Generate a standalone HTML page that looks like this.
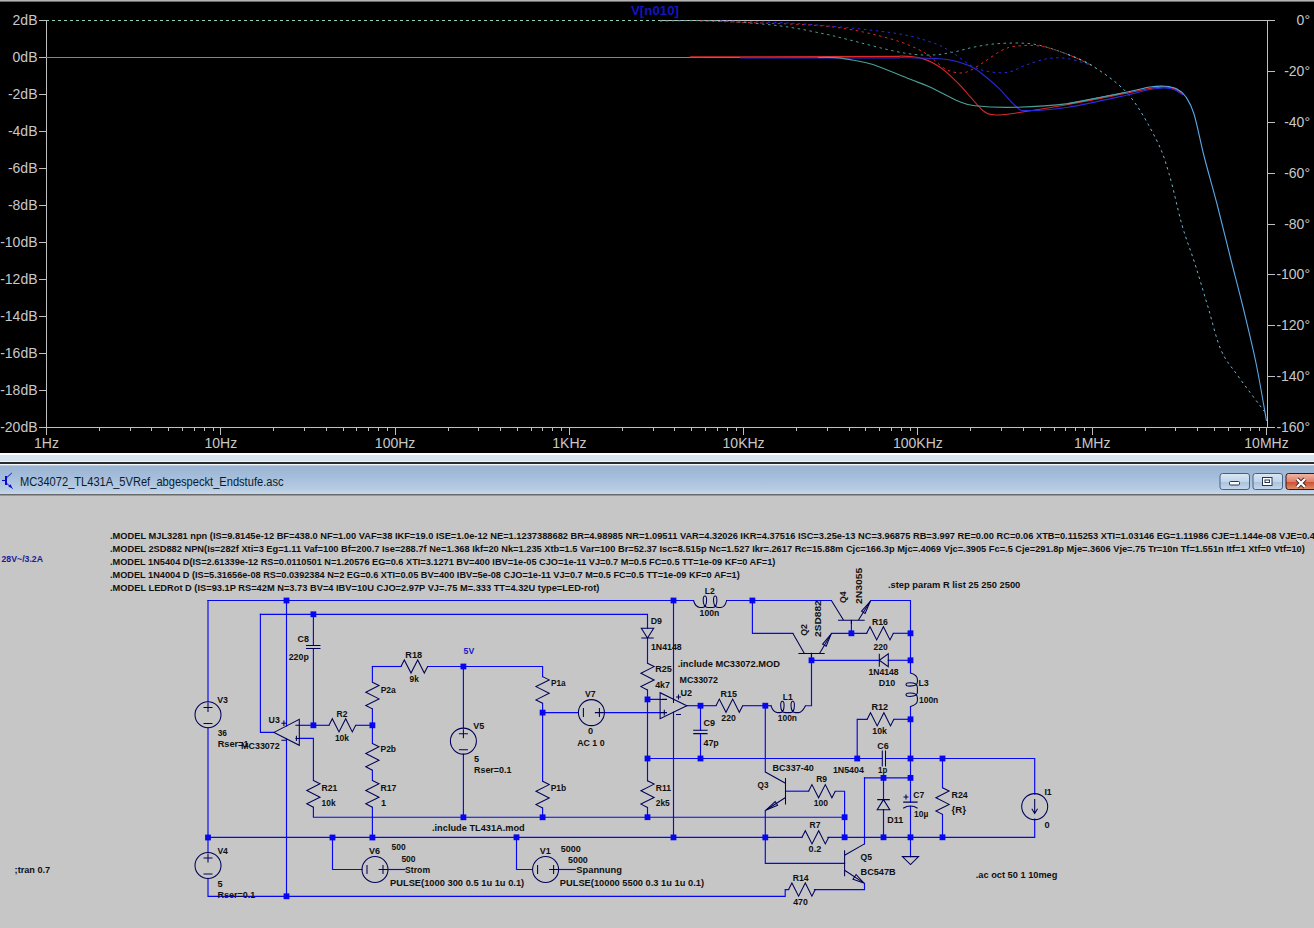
<!DOCTYPE html><html><head><meta charset="utf-8"><style>html,body{margin:0;padding:0;width:1314px;height:928px;overflow:hidden;background:#c6c6c6}svg{display:block}</style></head><body>
<svg width="1314" height="928" viewBox="0 0 1314 928">
<defs><linearGradient id="tb" x1="0" y1="0" x2="0" y2="1"><stop offset="0" stop-color="#9bb4d2"/><stop offset="0.35" stop-color="#a2bcda"/><stop offset="0.8" stop-color="#b6cbe2"/><stop offset="1" stop-color="#c6d8ea"/></linearGradient><linearGradient id="bmin" x1="0" y1="0" x2="0" y2="1"><stop offset="0" stop-color="#dbe7f4"/><stop offset="0.5" stop-color="#c2d5ea"/><stop offset="0.51" stop-color="#a9c1dd"/><stop offset="1" stop-color="#c5d7ec"/></linearGradient><linearGradient id="bcls" x1="0" y1="0" x2="0" y2="1"><stop offset="0" stop-color="#f0b8a8"/><stop offset="0.5" stop-color="#e0806a"/><stop offset="0.51" stop-color="#cc4a2c"/><stop offset="1" stop-color="#e0906e"/></linearGradient></defs>
<rect x="0" y="0" width="1314" height="453" fill="#000"/>
<rect x="0" y="0" width="1314" height="1" fill="#b4b4b4"/><rect x="0" y="1" width="1314" height="1" fill="#6a6a6a"/>
<g stroke="#c0c0c0" stroke-width="1" fill="none" shape-rendering="crispEdges">
<path d="M46.5 20.5V427.5H1267.5V20.5"/>
<path d="M660 20.5H1267.5"/>
<path d="M39 20.5H46.5"/>
<path d="M39 57.5H46.5"/>
<path d="M39 94.5H46.5"/>
<path d="M39 131.5H46.5"/>
<path d="M39 168.5H46.5"/>
<path d="M39 205.5H46.5"/>
<path d="M39 242.5H46.5"/>
<path d="M39 279.5H46.5"/>
<path d="M39 316.5H46.5"/>
<path d="M39 353.5H46.5"/>
<path d="M39 390.5H46.5"/>
<path d="M39 427.5H46.5"/>
<path d="M1267.5 20.5H1275"/>
<path d="M1267.5 71.4H1275"/>
<path d="M1267.5 122.2H1275"/>
<path d="M1267.5 173.1H1275"/>
<path d="M1267.5 224.0H1275"/>
<path d="M1267.5 274.9H1275"/>
<path d="M1267.5 325.8H1275"/>
<path d="M1267.5 376.6H1275"/>
<path d="M1267.5 427.5H1275"/>
<path d="M46.5 427.5V434.5"/>
<path d="M99.5 427.5V430.5"/>
<path d="M130.5 427.5V430.5"/>
<path d="M151.5 427.5V430.5"/>
<path d="M168.5 427.5V430.5"/>
<path d="M182.5 427.5V430.5"/>
<path d="M194.5 427.5V430.5"/>
<path d="M204.5 427.5V430.5"/>
<path d="M213.5 427.5V430.5"/>
<path d="M220.8 427.5V434.5"/>
<path d="M273.5 427.5V430.5"/>
<path d="M304.5 427.5V430.5"/>
<path d="M326.5 427.5V430.5"/>
<path d="M343.5 427.5V430.5"/>
<path d="M356.5 427.5V430.5"/>
<path d="M368.5 427.5V430.5"/>
<path d="M378.5 427.5V430.5"/>
<path d="M387.5 427.5V430.5"/>
<path d="M395.1 427.5V434.5"/>
<path d="M448.5 427.5V430.5"/>
<path d="M478.5 427.5V430.5"/>
<path d="M500.5 427.5V430.5"/>
<path d="M517.5 427.5V430.5"/>
<path d="M531.5 427.5V430.5"/>
<path d="M542.5 427.5V430.5"/>
<path d="M552.5 427.5V430.5"/>
<path d="M561.5 427.5V430.5"/>
<path d="M569.4 427.5V434.5"/>
<path d="M622.5 427.5V430.5"/>
<path d="M653.5 427.5V430.5"/>
<path d="M674.5 427.5V430.5"/>
<path d="M691.5 427.5V430.5"/>
<path d="M705.5 427.5V430.5"/>
<path d="M717.5 427.5V430.5"/>
<path d="M727.5 427.5V430.5"/>
<path d="M736.5 427.5V430.5"/>
<path d="M743.6 427.5V434.5"/>
<path d="M796.5 427.5V430.5"/>
<path d="M827.5 427.5V430.5"/>
<path d="M849.5 427.5V430.5"/>
<path d="M865.5 427.5V430.5"/>
<path d="M879.5 427.5V430.5"/>
<path d="M891.5 427.5V430.5"/>
<path d="M901.5 427.5V430.5"/>
<path d="M910.5 427.5V430.5"/>
<path d="M917.9 427.5V434.5"/>
<path d="M970.5 427.5V430.5"/>
<path d="M1001.5 427.5V430.5"/>
<path d="M1023.5 427.5V430.5"/>
<path d="M1040.5 427.5V430.5"/>
<path d="M1054.5 427.5V430.5"/>
<path d="M1065.5 427.5V430.5"/>
<path d="M1075.5 427.5V430.5"/>
<path d="M1084.5 427.5V430.5"/>
<path d="M1092.2 427.5V434.5"/>
<path d="M1145.5 427.5V430.5"/>
<path d="M1175.5 427.5V430.5"/>
<path d="M1197.5 427.5V430.5"/>
<path d="M1214.5 427.5V430.5"/>
<path d="M1228.5 427.5V430.5"/>
<path d="M1240.5 427.5V430.5"/>
<path d="M1250.5 427.5V430.5"/>
<path d="M1259.5 427.5V430.5"/>
<path d="M1266.5 427.5V434.5"/>
</g>
<g font-family="Liberation Sans, sans-serif" font-size="14" fill="#c8c8c8">
<text x="37.5" y="25.0" text-anchor="end">2dB</text>
<text x="37.5" y="62.0" text-anchor="end">0dB</text>
<text x="37.5" y="99.0" text-anchor="end">-2dB</text>
<text x="37.5" y="136.0" text-anchor="end">-4dB</text>
<text x="37.5" y="173.0" text-anchor="end">-6dB</text>
<text x="37.5" y="210.0" text-anchor="end">-8dB</text>
<text x="37.5" y="247.0" text-anchor="end">-10dB</text>
<text x="37.5" y="284.0" text-anchor="end">-12dB</text>
<text x="37.5" y="321.0" text-anchor="end">-14dB</text>
<text x="37.5" y="358.0" text-anchor="end">-16dB</text>
<text x="37.5" y="395.0" text-anchor="end">-18dB</text>
<text x="37.5" y="432.0" text-anchor="end">-20dB</text>
<text x="1310" y="25.0" text-anchor="end">0°</text>
<text x="1310" y="75.9" text-anchor="end">-20°</text>
<text x="1310" y="126.8" text-anchor="end">-40°</text>
<text x="1310" y="177.6" text-anchor="end">-60°</text>
<text x="1310" y="228.5" text-anchor="end">-80°</text>
<text x="1310" y="279.4" text-anchor="end">-100°</text>
<text x="1310" y="330.2" text-anchor="end">-120°</text>
<text x="1310" y="381.1" text-anchor="end">-140°</text>
<text x="1310" y="432.0" text-anchor="end">-160°</text>
<text x="46.5" y="447.8" text-anchor="middle">1Hz</text>
<text x="220.8" y="447.8" text-anchor="middle">10Hz</text>
<text x="395.1" y="447.8" text-anchor="middle">100Hz</text>
<text x="569.4" y="447.8" text-anchor="middle">1KHz</text>
<text x="743.6" y="447.8" text-anchor="middle">10KHz</text>
<text x="917.9" y="447.8" text-anchor="middle">100KHz</text>
<text x="1092.2" y="447.8" text-anchor="middle">1MHz</text>
<text x="1266.5" y="447.8" text-anchor="middle">10MHz</text>
</g>
<text x="631" y="15" font-family="Liberation Sans, sans-serif" font-size="13" font-weight="bold" fill="#1414c0" textLength="48" lengthAdjust="spacingAndGlyphs">V[n010]</text>
<path d="M46.0 20.5 L660.0 20.5" fill="none" stroke="#8cd0c0" stroke-width="1.0" stroke-dasharray="3,3" stroke-linejoin="round"/>
<path d="M660.0 21.0 C669.7 21.0 698.0 20.2 718.0 21.0 C738.0 21.8 762.7 23.8 780.0 25.9 C797.3 28.0 810.8 31.2 822.0 33.4 C833.2 35.6 834.3 36.2 847.0 39.3 C859.7 42.4 884.5 49.3 898.0 51.9 C911.5 54.5 919.0 55.0 928.0 55.1 C937.0 55.2 944.2 53.8 952.0 52.4 C959.8 51.0 967.0 48.4 975.0 46.9 C983.0 45.4 990.2 44.0 1000.0 43.5 C1009.8 43.0 1022.7 42.4 1034.0 44.2 C1045.3 46.0 1058.3 50.9 1068.0 54.5 C1077.7 58.1 1088.0 63.7 1092.0 65.6" fill="none" stroke="#4aa096" stroke-width="1.0" stroke-dasharray="2.5,3.5" stroke-linejoin="round"/>
<path d="M1068.0 54.5 C1072.0 56.4 1082.0 59.0 1092.0 65.6 C1102.0 72.2 1117.3 81.8 1128.0 94.0 C1138.7 106.2 1149.2 125.7 1156.0 139.0 C1162.8 152.3 1164.7 159.3 1169.0 173.6 C1173.3 187.9 1177.7 209.9 1182.0 225.0 C1186.3 240.1 1190.7 250.3 1195.0 264.0 C1199.3 277.7 1203.7 292.7 1208.0 307.0 C1212.3 321.3 1216.0 338.5 1221.0 350.0 C1226.0 361.5 1230.5 365.4 1238.0 376.0 C1245.5 386.6 1261.3 407.3 1266.0 413.6" fill="none" stroke="#6ab8d0" stroke-width="1.0" stroke-dasharray="2.5,3.5" stroke-linejoin="round"/>
<path d="M700.0 21.0 C707.8 21.2 725.2 21.6 747.0 22.5 C768.8 23.4 807.2 24.0 831.0 26.7 C854.8 29.4 874.5 34.4 890.0 38.7 C905.5 43.0 914.8 47.4 924.0 52.4 C933.2 57.4 938.8 65.4 945.0 68.8 C951.2 72.2 956.5 72.9 961.0 73.0 C965.5 73.1 967.8 71.6 972.0 69.5 C976.2 67.4 981.0 63.8 986.0 60.6 C991.0 57.4 997.0 52.7 1002.0 50.3 C1007.0 47.9 1009.5 46.9 1016.0 46.2 C1022.5 45.5 1032.3 44.8 1041.0 46.2 C1049.7 47.6 1059.5 51.3 1068.0 54.5 C1076.5 57.7 1088.0 63.7 1092.0 65.6" fill="none" stroke="#e02828" stroke-width="1.0" stroke-dasharray="2.5,3.5" stroke-linejoin="round"/>
<path d="M720.0 21.0 C732.8 21.4 768.7 21.6 797.0 23.5 C825.3 25.4 867.7 29.4 890.0 32.5 C912.3 35.6 920.7 38.8 931.0 42.1 C941.3 45.4 945.2 48.4 952.0 52.4 C958.8 56.4 965.8 62.9 972.0 66.1 C978.2 69.3 983.0 70.6 989.0 71.6 C995.0 72.6 1001.7 73.4 1008.0 72.3 C1014.3 71.2 1020.3 67.0 1027.0 64.7 C1033.7 62.4 1041.2 59.6 1048.0 58.6 C1054.8 57.6 1060.7 57.4 1068.0 58.6 C1075.3 59.8 1088.0 64.4 1092.0 65.6" fill="none" stroke="#2a2ae0" stroke-width="1.0" stroke-dasharray="2.5,3.5" stroke-linejoin="round"/>
<path d="M46.0 57.5 L836.0 57.5" fill="none" stroke="#4aa096" stroke-width="1.1" stroke-linejoin="round"/>
<path d="M690.0 56.9 L900.0 56.4" fill="none" stroke="#e02828" stroke-width="1.1" stroke-linejoin="round"/>
<path d="M900.0 56.0 C902.0 56.1 908.3 56.2 912.0 56.6 C915.7 57.0 918.3 57.2 922.0 58.4 C925.7 59.5 930.0 61.3 934.0 63.5 C938.0 65.7 941.7 68.2 946.0 71.8 C950.3 75.4 953.8 78.7 960.0 85.2 C966.2 91.7 977.3 105.7 983.0 110.6 C988.7 115.5 989.7 114.1 994.0 114.7 C998.3 115.3 996.7 115.7 1009.0 114.0 C1021.3 112.3 1048.7 107.9 1068.0 104.5 C1087.3 101.1 1111.3 96.2 1125.0 93.5 C1138.7 90.8 1143.3 89.6 1150.0 88.5 C1156.7 87.4 1160.8 86.9 1165.0 87.0 C1169.2 87.1 1172.0 87.8 1175.0 89.0 C1178.0 90.2 1181.7 93.6 1183.0 94.5" fill="none" stroke="#e02828" stroke-width="1.1" stroke-linejoin="round"/>
<path d="M740.0 57.9 L900.0 57.9" fill="none" stroke="#2a2ae0" stroke-width="1.1" stroke-linejoin="round"/>
<path d="M900.0 57.5 C907.5 57.8 933.3 57.8 945.0 59.2 C956.7 60.6 963.2 63.1 970.0 66.1 C976.8 69.1 981.0 73.1 986.0 77.0 C991.0 80.9 995.0 84.5 1000.0 89.4 C1005.0 94.3 1011.5 103.0 1016.0 106.5 C1020.5 110.0 1018.3 110.5 1027.0 110.6 C1035.7 110.7 1051.7 109.7 1068.0 107.2 C1084.3 104.7 1111.3 98.5 1125.0 95.5 C1138.7 92.5 1143.3 90.8 1150.0 89.5 C1156.7 88.2 1160.8 87.9 1165.0 88.0 C1169.2 88.1 1172.0 88.8 1175.0 90.0 C1178.0 91.2 1181.7 94.2 1183.0 95.0" fill="none" stroke="#2a2ae0" stroke-width="1.1" stroke-linejoin="round"/>
<path d="M1068.0 103.6 C1077.5 101.8 1111.3 95.3 1125.0 92.5 C1138.7 89.7 1143.3 88.0 1150.0 87.0 C1156.7 86.0 1160.5 85.9 1165.0 86.2 C1169.5 86.5 1173.5 87.2 1177.0 89.0 C1180.5 90.8 1183.2 92.8 1186.0 97.0 C1188.8 101.2 1191.0 104.2 1194.0 114.0 C1197.0 123.8 1200.2 141.0 1204.0 156.0 C1207.8 171.0 1212.7 187.3 1217.0 204.0 C1221.3 220.7 1225.7 238.8 1230.0 256.0 C1234.3 273.2 1238.7 289.2 1243.0 307.0 C1247.3 324.8 1252.1 344.0 1256.0 363.0 C1259.9 382.0 1264.8 411.3 1266.5 421.0" fill="none" stroke="#5aa8e8" stroke-width="1.1" stroke-linejoin="round"/>
<path d="M818.0 57.5 C821.0 57.5 830.3 57.2 836.0 57.6 C841.7 58.0 845.8 58.9 852.0 60.0 C858.2 61.1 863.4 61.3 873.0 64.5 C882.6 67.7 899.9 75.3 909.6 79.1 C919.3 82.9 922.9 83.8 931.0 87.5 C939.1 91.2 950.7 98.0 958.0 101.0 C965.3 104.0 965.2 104.8 975.0 105.8 C984.8 106.8 1001.5 107.6 1017.0 107.2 C1032.5 106.8 1050.0 106.0 1068.0 103.6 C1086.0 101.1 1115.5 94.3 1125.0 92.5" fill="none" stroke="#4aa096" stroke-width="1.1" stroke-linejoin="round"/>
<rect x="0" y="453" width="1314" height="2" fill="#ffffff"/>
<rect x="0" y="455" width="1314" height="6" fill="#d6e4ef"/>
<rect x="0" y="461" width="1314" height="1" fill="#eef4f8"/>
<rect x="0" y="462" width="1314" height="2" fill="#2a2a2a"/>
<rect x="0" y="464" width="1314" height="1.5" fill="#f4f8fb"/>
<rect x="0" y="465.5" width="1314" height="28.5" fill="url(#tb)"/>
<rect x="0" y="494" width="1314" height="1.5" fill="#6a6a6a"/>
<g stroke="#0a0ac8" fill="none"><path d="M2 480.5H5.5" stroke-width="1.1"/><path d="M6 476V485" stroke-width="2"/><path d="M6.5 477.8L11.8 473" stroke-width="1"/><path d="M6.5 483.2L12.7 488.6" stroke-width="1"/></g>
<path d="M12.3 488.3L8.3 486.5L10.6 484.3Z" fill="#0a0ac8"/>
<text x="20" y="485.7" font-family="Liberation Sans, sans-serif" font-size="12.5" fill="#0c1a30" textLength="263.5" lengthAdjust="spacingAndGlyphs">MC34072_TL431A_5VRef_abgespeckt_Endstufe.asc</text>
<rect x="1220.0" y="473.5" width="29.5" height="16" rx="2.5" fill="url(#bmin)" stroke="#4a6080" stroke-width="1"/>
<rect x="1253.0" y="473.5" width="29.5" height="16" rx="2.5" fill="url(#bmin)" stroke="#4a6080" stroke-width="1"/>
<rect x="1286.0" y="473.5" width="34" height="16" rx="2.5" fill="url(#bcls)" stroke="#2a1a1a" stroke-width="1"/>
<rect x="1229.5" y="481.5" width="10" height="3.5" rx="1" fill="#fff" stroke="#2a3550" stroke-width="1"/>
<rect x="1262.5" y="477.5" width="9.5" height="8" fill="#fff" stroke="#2a3550" stroke-width="1"/><rect x="1265" y="480" width="4.5" height="2.5" fill="none" stroke="#2a3550" stroke-width="1"/>
<path d="M1297 479L1305 487M1305 479L1297 487" stroke="#3a2020" stroke-width="4"/><path d="M1297 479L1305 487M1305 479L1297 487" stroke="#fff" stroke-width="2.4"/>
<g fill="none" stroke="#0606f0" stroke-width="1.15" stroke-linejoin="miter" stroke-linecap="square">
<path d="M208 600.5 L693.5 600.5"/>
<path d="M726.6 600.5 L831.4 600.5"/>
<path d="M870.8 600.5 L910.5 600.5 L910.5 673"/>
<path d="M208 600.5 L208 701.8"/>
<path d="M208 727.8 L208 852.5"/>
<path d="M208 878.5 L208 896.3 L785.2 896.3 L785.2 889.6 L788.6 889.6"/>
<path d="M814.5 889.6 L864.5 889.6 L864.5 883.4"/>
<path d="M260.4 614.3 L647.5 614.3 L647.5 628.2"/>
<path d="M260.4 614.3 L260.4 732.4 L274 732.4"/>
<path d="M286.5 600.5 L286.5 725.9"/>
<path d="M286.5 739 L286.5 896.3"/>
<path d="M313.4 614.3 L313.4 645.5"/>
<path d="M313.4 648.5 L313.4 725.3"/>
<path d="M299.3 725.3 L329 725.3"/>
<path d="M355.7 725.3 L372.4 725.3"/>
<path d="M299.3 738.4 L313.4 738.4 L313.4 780.5"/>
<path d="M313.4 807.2 L313.4 817.2 L844.6 817.2"/>
<path d="M372.4 666.5 L372.4 682.2"/>
<path d="M372.4 708.9 L372.4 743.5"/>
<path d="M372.4 770.2 L372.4 780.5"/>
<path d="M372.4 807.2 L372.4 837.5"/>
<path d="M372.4 666.5 L401 666.5"/>
<path d="M427.7 666.5 L542.6 666.5 L542.6 676.6"/>
<path d="M542.6 703.3 L542.6 781.3"/>
<path d="M542.6 808 L542.6 817.3"/>
<path d="M463.4 666.5 L463.4 728"/>
<path d="M463.4 754.2 L463.4 817.3"/>
<path d="M542.6 712.6 L578.2 712.6"/>
<path d="M604.6 712.6 L660.1 712.6"/>
<path d="M673.5 600.5 L673.5 699.2"/>
<path d="M673.5 712.2 L673.5 837.4"/>
<path d="M647.5 638 L647.5 663.3"/>
<path d="M647.5 690 L647.5 699.4 L660.1 699.4"/>
<path d="M647.5 699.4 L647.5 780.8"/>
<path d="M647.5 807.5 L647.5 817.2"/>
<path d="M686.8 705.7 L716 705.7"/>
<path d="M742.7 705.7 L771 705.7"/>
<path d="M805.5 705.7 L811.5 705.7 L811.5 653.4"/>
<path d="M700.5 705.7 L700.5 730.3"/>
<path d="M700.5 733.6 L700.5 758.5"/>
<path d="M647.5 758.5 L882.3 758.5"/>
<path d="M885.5 758.5 L1034.7 758.5 L1034.7 794.1"/>
<path d="M1034.7 819.1 L1034.7 837.3 L827.9 837.3"/>
<path d="M802 837.3 L208 837.3"/>
<path d="M857.2 758.5 L857.2 719.3 L867.2 719.3"/>
<path d="M893.9 719.3 L910.5 719.3"/>
<path d="M910.5 706.6 L910.5 802.1"/>
<path d="M910.5 806.3 L910.5 856.6"/>
<path d="M864.5 777.9 L910.5 777.9"/>
<path d="M864.5 777.9 L864.5 843.9"/>
<path d="M883.5 777.9 L883.5 799.6"/>
<path d="M883.5 809.7 L883.5 837.3"/>
<path d="M765.3 705.7 L765.3 772"/>
<path d="M785.5 791.2 L808.6 791.2"/>
<path d="M835.3 791.2 L844.6 791.2 L844.6 837.3"/>
<path d="M765.3 810.5 L765.3 863.3 L844.6 863.3"/>
<path d="M942.5 758.5 L942.5 787.7"/>
<path d="M942.5 814.4 L942.5 837.3"/>
<path d="M332.5 837.5 L332.5 869.5 L362 869.5"/>
<path d="M388 869.5 L404.7 869.5"/>
<path d="M516.5 837.3 L516.5 869.5 L532.4 869.5"/>
<path d="M558.8 869.5 L575.3 869.5"/>
<path d="M752.4 600.5 L752.4 633.3 L792.8 633.3"/>
<path d="M831.6 633.3 L866.7 633.3"/>
<path d="M893.4 633.3 L910.5 633.3"/>
<path d="M851.4 620.2 L851.4 633.3"/>
<path d="M811.5 660.3 L879.3 660.3"/>
<path d="M888.3 660.3 L910.5 660.3"/>
</g>
<g fill="none" stroke="#000058" stroke-width="1.05" stroke-linejoin="miter">
<path d="M372.4 682.2 L379.0 685.5 L365.8 692.2 L379.0 698.9 L365.8 705.5 L372.4 708.9"/>
<path d="M372.4 743.5 L379.0 746.8 L365.8 753.5 L379.0 760.2 L365.8 766.8 L372.4 770.2"/>
<path d="M372.4 780.5 L379.0 783.8 L365.8 790.5 L379.0 797.2 L365.8 803.8 L372.4 807.2"/>
<path d="M313.4 780.5 L320.0 783.8 L306.8 790.5 L320.0 797.2 L306.8 803.8 L313.4 807.2"/>
<path d="M542.6 676.6 L549.2 679.9 L536.0 686.6 L549.2 693.3 L536.0 699.9 L542.6 703.3"/>
<path d="M542.6 781.3 L549.2 784.6 L536.0 791.3 L549.2 798.0 L536.0 804.6 L542.6 808.0"/>
<path d="M647.5 663.3 L654.1 666.6 L640.9 673.3 L654.1 680.0 L640.9 686.6 L647.5 690.0"/>
<path d="M647.5 780.8 L654.1 784.1 L640.9 790.8 L654.1 797.5 L640.9 804.1 L647.5 807.5"/>
<path d="M942.5 787.7 L949.1 791.0 L935.9 797.7 L949.1 804.4 L935.9 811.0 L942.5 814.4"/>
<path d="M329.0 725.3 L332.3 718.7 L339.0 731.9 L345.7 718.7 L352.3 731.9 L355.7 725.3"/>
<path d="M401.0 666.5 L404.3 659.9 L411.0 673.1 L417.7 659.9 L424.3 673.1 L427.7 666.5"/>
<path d="M716.0 705.7 L719.3 699.1 L726.0 712.3 L732.7 699.1 L739.3 712.3 L742.7 705.7"/>
<path d="M866.7 633.3 L870.0 626.7 L876.7 639.9 L883.4 626.7 L890.0 639.9 L893.4 633.3"/>
<path d="M867.2 719.3 L870.5 712.7 L877.2 725.9 L883.9 712.7 L890.5 725.9 L893.9 719.3"/>
<path d="M808.6 791.2 L811.9 784.6 L818.6 797.8 L825.3 784.6 L831.9 797.8 L835.3 791.2"/>
<path d="M802.0 837.3 L805.3 830.7 L812.0 843.9 L818.7 830.7 L825.3 843.9 L828.7 837.3"/>
<path d="M788.6 889.6 L791.9 883.0 L798.6 896.2 L805.3 883.0 L811.9 896.2 L815.3 889.6"/>
<path d="M306 645.5H320.5M306 648.5H320.5"/>
<path d="M693.2 730.3H707.6M693.2 733.6H707.6"/>
<path d="M882.3 750.6V766.4M885.5 750.6V766.4"/>
<path d="M903.2 802.1H917.6M903.2 808.3Q910.4 803.8 917.6 808.3M906 794.5V799.5M903.5 797H908.5"/>
<path d="M641.3 628.2H653.7L647.5 638ZM641.3 638H653.7"/>
<path d="M888.3 653.8V666.8L879.3 660.3ZM879.3 653.8V666.8"/>
<path d="M877.2 809.7H889.8L883.5 799.6ZM877.2 799.6H889.8"/>
<path d="M902.4 856.6H918.6L910.5 864.6Z"/>
<path d="M299.3 719.3V745.3L274 732.4Z"/>
<path d="M295.4 725.3H299.3M295.4 738.4H299.3M296.4 735.8V741"/>
<path d="M281.4 723.3H286.5M283.9 720.6V726M281.4 740.2H286.5"/>
<path d="M660.1 692.7V718.7L686.8 705.7Z"/>
<path d="M660.1 699.4H667M662 699.2H667M660.1 712.6H667M664.3 709.8V715.4"/>
<path d="M673.5 699.2V703M676 697H681M678.5 694.5V699.5M676 714.5H681"/>
<path d="M831.4 600.5L843.6 620.2M838 620.2H864.7M858.3 620.2L870.8 600.5M851.4 620.2V624"/>
<path d="M792.8 633.3L804.4 653.4M798.4 653.4H824.7M819.5 653.4L831.6 633.3M811.4 653.4V657"/>
<path d="M765.3 772L785.5 783.2M785.5 777.9V804.6M785.5 797.5L765.3 810.5"/>
<path d="M864.5 843.9L844.6 855.2M844.6 850.2V876.2M844.6 870.3L864.5 883.4"/>
<path d="M870.3 601.3L865.1 613.4L861.6 611.1Z"/>
<path d="M831.1 634.1L826.2 646.3L822.6 644.2Z"/>
<path d="M766.3 809.9L775.2 801.5L777.6 805.2Z"/>
<path d="M863.7 882.9L853.0 879.2L856.1 874.5Z"/>
<path d="M693.5 600.5C695 605.5 697 607.4 700 607.4H702.5C705.5 607.4 706.6 604 706.6 600C706.6 596.5 705.8 596 704.9 596C704 596 703.2 596.5 703.2 600C703.2 604 704.5 607.4 708 607.4H712.8C715.8 607.4 716.9 604 716.9 600C716.9 596.5 716.1 596 715.2 596C714.3 596 713.5 596.5 713.5 600C713.5 604 714.8 607.4 718.3 607.4H721C724 607.4 725.5 605.5 726.6 600.5"/>
<path d="M771 705.7C772.5 710.7 774.5 712.6 777.5 712.6H780C783 712.6 784.1 709.2 784.1 705.2C784.1 701.7 783.3 701.2 782.4 701.2C781.5 701.2 780.7 701.7 780.7 705.2C780.7 709.2 782 712.6 785.5 712.6H790.3C793.3 712.6 794.4 709.2 794.4 705.2C794.4 701.7 793.6 701.2 792.7 701.2C791.8 701.2 791 701.7 791 705.2C791 709.2 792.3 712.6 795.8 712.6H798.5C801.5 712.6 803 710.7 805.5 705.7"/>
<path d="M910.5 673C915.5 674.5 917.4 676.5 917.4 679.5V682C917.4 685 914 686.1 910 686.1C906.5 686.1 906 685.3 906 684.4C906 683.5 906.5 682.7 910 682.7C914 682.7 917.4 684 917.4 687.5V692.3C917.4 695.3 914 696.4 910 696.4C906.5 696.4 906 695.6 906 694.7C906 693.8 906.5 693 910 693C914 693 917.4 694.3 917.4 697.8V700.5C917.4 703.5 915.5 705 910.5 706.6"/>
<path d="M203.5 707.5H212.5M208 703V712M203.5 723.5H212.5"/>
<path d="M203.5 858H212.5M208 853.5V862.5M203.5 874H212.5"/>
<path d="M458.9 733.8H467.9M463.4 729.3V738.3M458.9 749.8H467.9"/>
<path d="M583.4 708.1V717.1M594.9 712.6H603.9M599.4 708.1V717.1"/>
<path d="M367.0 865.0V874.0M378.5 869.5H387.5M383.0 865.0V874.0"/>
<path d="M537.6 865.0V874.0M549.1 869.5H558.1M553.6 865.0V874.0"/>
<path d="M1034.7 799V812.5M1031.8 808.8L1034.7 813.5L1037.6 808.8"/>
<circle cx="208" cy="714.8" r="13"/>
<circle cx="208" cy="865.5" r="13"/>
<circle cx="463.4" cy="741.1" r="13"/>
<circle cx="591.4" cy="712.6" r="13"/>
<circle cx="375" cy="869.5" r="13"/>
<circle cx="545.6" cy="869.5" r="13"/>
<circle cx="1034.7" cy="806.6" r="13"/>
</g>
<g fill="#0606f0">
<rect x="283.6" y="597.6" width="5.8" height="5.8"/>
<rect x="310.5" y="611.4" width="5.8" height="5.8"/>
<rect x="310.5" y="722.4" width="5.8" height="5.8"/>
<rect x="369.5" y="722.4" width="5.8" height="5.8"/>
<rect x="460.5" y="663.6" width="5.8" height="5.8"/>
<rect x="539.7" y="709.7" width="5.8" height="5.8"/>
<rect x="205.1" y="834.6" width="5.8" height="5.8"/>
<rect x="283.6" y="893.4" width="5.8" height="5.8"/>
<rect x="329.6" y="834.6" width="5.8" height="5.8"/>
<rect x="369.5" y="834.6" width="5.8" height="5.8"/>
<rect x="460.5" y="814.4" width="5.8" height="5.8"/>
<rect x="539.7" y="814.4" width="5.8" height="5.8"/>
<rect x="513.6" y="834.4" width="5.8" height="5.8"/>
<rect x="670.6" y="597.6" width="5.8" height="5.8"/>
<rect x="749.5" y="597.6" width="5.8" height="5.8"/>
<rect x="644.6" y="696.5" width="5.8" height="5.8"/>
<rect x="697.6" y="702.8" width="5.8" height="5.8"/>
<rect x="762.4" y="702.8" width="5.8" height="5.8"/>
<rect x="808.6" y="657.4" width="5.8" height="5.8"/>
<rect x="848.5" y="630.4" width="5.8" height="5.8"/>
<rect x="907.6" y="630.4" width="5.8" height="5.8"/>
<rect x="907.6" y="657.4" width="5.8" height="5.8"/>
<rect x="907.6" y="716.4" width="5.8" height="5.8"/>
<rect x="644.6" y="755.6" width="5.8" height="5.8"/>
<rect x="697.6" y="755.6" width="5.8" height="5.8"/>
<rect x="854.3" y="755.6" width="5.8" height="5.8"/>
<rect x="907.6" y="755.6" width="5.8" height="5.8"/>
<rect x="939.6" y="755.6" width="5.8" height="5.8"/>
<rect x="880.6" y="775.0" width="5.8" height="5.8"/>
<rect x="907.6" y="775.0" width="5.8" height="5.8"/>
<rect x="644.6" y="814.3" width="5.8" height="5.8"/>
<rect x="841.7" y="814.3" width="5.8" height="5.8"/>
<rect x="670.6" y="834.5" width="5.8" height="5.8"/>
<rect x="762.4" y="834.5" width="5.8" height="5.8"/>
<rect x="841.7" y="834.4" width="5.8" height="5.8"/>
<rect x="880.6" y="834.4" width="5.8" height="5.8"/>
<rect x="907.6" y="834.4" width="5.8" height="5.8"/>
<rect x="939.6" y="834.4" width="5.8" height="5.8"/>
</g>
<g font-family="Liberation Sans, sans-serif">
<text x="110" y="539" font-size="9.2" fill="#101010" font-weight="bold" textLength="1210.0" lengthAdjust="spacingAndGlyphs">.MODEL MJL3281 npn (IS=9.8145e-12 BF=438.0 NF=1.00 VAF=38 IKF=19.0 ISE=1.0e-12 NE=1.1237388682 BR=4.98985 NR=1.09511 VAR=4.32026 IKR=4.37516 ISC=3.25e-13 NC=3.96875 RB=3.997 RE=0.00 RC=0.06 XTB=0.115253 XTI=1.03146 EG=1.11986 CJE=1.144e-08 VJE=0.46</text>
<text x="110" y="552" font-size="9.2" fill="#101010" font-weight="bold" textLength="1194.8" lengthAdjust="spacingAndGlyphs">.MODEL 2SD882 NPN(Is=282f Xti=3 Eg=1.11 Vaf=100 Bf=200.7 Ise=288.7f Ne=1.368 Ikf=20 Nk=1.235 Xtb=1.5 Var=100 Br=52.37 Isc=8.515p Nc=1.527 Ikr=.2617 Rc=15.88m Cjc=166.3p Mjc=.4069 Vjc=.3905 Fc=.5 Cje=291.8p Mje=.3606 Vje=.75 Tr=10n Tf=1.551n Itf=1 Xtf=0 Vtf=10)</text>
<text x="110" y="565" font-size="9.2" fill="#101010" font-weight="bold" textLength="665.4" lengthAdjust="spacingAndGlyphs">.MODEL 1N5404 D(IS=2.61339e-12 RS=0.0110501 N=1.20576 EG=0.6 XTI=3.1271 BV=400 IBV=1e-05 CJO=1e-11 VJ=0.7 M=0.5 FC=0.5 TT=1e-09 KF=0 AF=1)</text>
<text x="110" y="578" font-size="9.2" fill="#101010" font-weight="bold" textLength="629.7" lengthAdjust="spacingAndGlyphs">.MODEL 1N4004 D (IS=5.31656e-08 RS=0.0392384 N=2 EG=0.6 XTI=0.05 BV=400 IBV=5e-08 CJO=1e-11 VJ=0.7 M=0.5 FC=0.5 TT=1e-09 KF=0 AF=1)</text>
<text x="110" y="591" font-size="9.2" fill="#101010" font-weight="bold" textLength="489.4" lengthAdjust="spacingAndGlyphs">.MODEL LEDRot D (IS=93.1P RS=42M N=3.73 BV=4 IBV=10U CJO=2.97P VJ=.75 M=.333 TT=4.32U type=LED-rot)</text>
<text x="1.5" y="562" font-size="9.2" fill="#1c1c98" font-weight="bold" textLength="41.5" lengthAdjust="spacingAndGlyphs">28V~/3.2A</text>
<text x="14.6" y="872.8" font-size="9.2" fill="#101010" font-weight="bold" textLength="35.6" lengthAdjust="spacingAndGlyphs">;tran 0.7</text>
<text x="887.9" y="588.4" font-size="9.2" fill="#101010" font-weight="bold" textLength="132.4" lengthAdjust="spacingAndGlyphs">.step param R list 25 250 2500</text>
<text x="975.8" y="877.7" font-size="9.2" fill="#101010" font-weight="bold" textLength="81.6" lengthAdjust="spacingAndGlyphs">.ac oct 50 1 10meg</text>
<text x="432" y="831.1" font-size="9.2" fill="#101010" font-weight="bold" textLength="92.7" lengthAdjust="spacingAndGlyphs">.include TL431A.mod</text>
<text x="677.7" y="667.1" font-size="9.2" fill="#101010" font-weight="bold" textLength="102.3" lengthAdjust="spacingAndGlyphs">.include MC33072.MOD</text>
<text x="297.5" y="641.5" font-size="9.2" fill="#101010" font-weight="bold" textLength="11.4" lengthAdjust="spacingAndGlyphs">C8</text>
<text x="288.7" y="660.3" font-size="9.2" fill="#101010" font-weight="bold" textLength="20.1" lengthAdjust="spacingAndGlyphs">220p</text>
<text x="217.2" y="703" font-size="9.2" fill="#101010" font-weight="bold" textLength="10.8" lengthAdjust="spacingAndGlyphs">V3</text>
<text x="217.7" y="736.1" font-size="9.2" fill="#101010" font-weight="bold" textLength="9.2" lengthAdjust="spacingAndGlyphs">36</text>
<text x="217.7" y="747" font-size="9.2" fill="#101010" font-weight="bold">Rser=1</text>
<text x="241" y="748.5" font-size="9.2" fill="#101010" font-weight="bold" textLength="38.8" lengthAdjust="spacingAndGlyphs">MC33072</text>
<text x="268.6" y="722.7" font-size="9.2" fill="#101010" font-weight="bold" textLength="11.2" lengthAdjust="spacingAndGlyphs">U3</text>
<text x="336.5" y="717.3" font-size="9.2" fill="#101010" font-weight="bold" textLength="10.9" lengthAdjust="spacingAndGlyphs">R2</text>
<text x="334.9" y="741" font-size="9.2" fill="#101010" font-weight="bold" textLength="14.2" lengthAdjust="spacingAndGlyphs">10k</text>
<text x="380.7" y="692.7" font-size="9.2" fill="#101010" font-weight="bold" textLength="15.1" lengthAdjust="spacingAndGlyphs">P2a</text>
<text x="409.5" y="681.8" font-size="9.2" fill="#101010" font-weight="bold" textLength="9.3" lengthAdjust="spacingAndGlyphs">9k</text>
<text x="405.3" y="658" font-size="9.2" fill="#101010" font-weight="bold" textLength="16.8" lengthAdjust="spacingAndGlyphs">R18</text>
<text x="551" y="685.7" font-size="9.2" fill="#101010" font-weight="bold" textLength="14.6" lengthAdjust="spacingAndGlyphs">P1a</text>
<text x="585" y="696.7" font-size="9.2" fill="#101010" font-weight="bold" textLength="10.6" lengthAdjust="spacingAndGlyphs">V7</text>
<text x="473.2" y="729" font-size="9.2" fill="#101010" font-weight="bold" textLength="11.0" lengthAdjust="spacingAndGlyphs">V5</text>
<text x="380.5" y="752" font-size="9.2" fill="#101010" font-weight="bold" textLength="15.5" lengthAdjust="spacingAndGlyphs">P2b</text>
<text x="321.6" y="791" font-size="9.2" fill="#101010" font-weight="bold" textLength="15.8" lengthAdjust="spacingAndGlyphs">R21</text>
<text x="321.6" y="806.1" font-size="9.2" fill="#101010" font-weight="bold" textLength="14.0" lengthAdjust="spacingAndGlyphs">10k</text>
<text x="380.5" y="791" font-size="9.2" fill="#101010" font-weight="bold" textLength="15.9" lengthAdjust="spacingAndGlyphs">R17</text>
<text x="381" y="806.1" font-size="9.2" fill="#101010" font-weight="bold">1</text>
<text x="217.4" y="854" font-size="9.2" fill="#101010" font-weight="bold" textLength="10.5" lengthAdjust="spacingAndGlyphs">V4</text>
<text x="217.4" y="886.8" font-size="9.2" fill="#101010" font-weight="bold">5</text>
<text x="217.4" y="897.8" font-size="9.2" fill="#101010" font-weight="bold" textLength="37.9" lengthAdjust="spacingAndGlyphs">Rser=0.1</text>
<text x="369" y="854" font-size="9.2" fill="#101010" font-weight="bold" textLength="11.0" lengthAdjust="spacingAndGlyphs">V6</text>
<text x="391.5" y="850" font-size="9.2" fill="#101010" font-weight="bold" textLength="14.1" lengthAdjust="spacingAndGlyphs">500</text>
<text x="401.4" y="861.8" font-size="9.2" fill="#101010" font-weight="bold" textLength="14.2" lengthAdjust="spacingAndGlyphs">500</text>
<text x="405.1" y="873.1" font-size="9.2" fill="#101010" font-weight="bold" textLength="25.0" lengthAdjust="spacingAndGlyphs">Strom</text>
<text x="390" y="885.9" font-size="9.2" fill="#101010" font-weight="bold" textLength="134.2" lengthAdjust="spacingAndGlyphs">PULSE(1000 300 0.5 1u 1u 0.1)</text>
<text x="539.7" y="853.9" font-size="9.2" fill="#101010" font-weight="bold" textLength="11.0" lengthAdjust="spacingAndGlyphs">V1</text>
<text x="560.7" y="851.6" font-size="9.2" fill="#101010" font-weight="bold" textLength="20.1" lengthAdjust="spacingAndGlyphs">5000</text>
<text x="568" y="862.7" font-size="9.2" fill="#101010" font-weight="bold" textLength="19.8" lengthAdjust="spacingAndGlyphs">5000</text>
<text x="576.3" y="873.1" font-size="9.2" fill="#101010" font-weight="bold" textLength="45.6" lengthAdjust="spacingAndGlyphs">Spannung</text>
<text x="559.8" y="885.9" font-size="9.2" fill="#101010" font-weight="bold" textLength="144.2" lengthAdjust="spacingAndGlyphs">PULSE(10000 5500 0.3 1u 1u 0.1)</text>
<text x="474" y="762.1" font-size="9.2" fill="#101010" font-weight="bold">5</text>
<text x="474" y="773" font-size="9.2" fill="#101010" font-weight="bold" textLength="37.4" lengthAdjust="spacingAndGlyphs">Rser=0.1</text>
<text x="588.1" y="733.8" font-size="9.2" fill="#101010" font-weight="bold">0</text>
<text x="577.2" y="745.7" font-size="9.2" fill="#101010" font-weight="bold" textLength="27.4" lengthAdjust="spacingAndGlyphs">AC 1 0</text>
<text x="550.7" y="791" font-size="9.2" fill="#101010" font-weight="bold" textLength="15.5" lengthAdjust="spacingAndGlyphs">P1b</text>
<text x="650.7" y="623.8" font-size="9.2" fill="#101010" font-weight="bold" textLength="11.3" lengthAdjust="spacingAndGlyphs">D9</text>
<text x="651" y="650" font-size="9.2" fill="#101010" font-weight="bold" textLength="30.6" lengthAdjust="spacingAndGlyphs">1N4148</text>
<text x="655.2" y="672.4" font-size="9.2" fill="#101010" font-weight="bold" textLength="16.6" lengthAdjust="spacingAndGlyphs">R25</text>
<text x="655.2" y="687.8" font-size="9.2" fill="#101010" font-weight="bold" textLength="14.8" lengthAdjust="spacingAndGlyphs">4k7</text>
<text x="679.5" y="682.8" font-size="9.2" fill="#101010" font-weight="bold" textLength="38.4" lengthAdjust="spacingAndGlyphs">MC33072</text>
<text x="680.4" y="695.9" font-size="9.2" fill="#101010" font-weight="bold" textLength="11.5" lengthAdjust="spacingAndGlyphs">U2</text>
<text x="704.7" y="593.7" font-size="9.2" fill="#101010" font-weight="bold" textLength="10.0" lengthAdjust="spacingAndGlyphs">L2</text>
<text x="699.6" y="615.6" font-size="9.2" fill="#101010" font-weight="bold" textLength="19.7" lengthAdjust="spacingAndGlyphs">100n</text>
<text x="720.6" y="696.8" font-size="9.2" fill="#101010" font-weight="bold" textLength="16.4" lengthAdjust="spacingAndGlyphs">R15</text>
<text x="721.3" y="721" font-size="9.2" fill="#101010" font-weight="bold" textLength="14.5" lengthAdjust="spacingAndGlyphs">220</text>
<text x="782.7" y="699.6" font-size="9.2" fill="#101010" font-weight="bold" textLength="10.0" lengthAdjust="spacingAndGlyphs">L1</text>
<text x="777.8" y="721" font-size="9.2" fill="#101010" font-weight="bold" textLength="19.2" lengthAdjust="spacingAndGlyphs">100n</text>
<text x="703.5" y="726.2" font-size="9.2" fill="#101010" font-weight="bold" textLength="11.6" lengthAdjust="spacingAndGlyphs">C9</text>
<text x="703.5" y="746.1" font-size="9.2" fill="#101010" font-weight="bold" textLength="15.3" lengthAdjust="spacingAndGlyphs">47p</text>
<text x="655.8" y="791.4" font-size="9.2" fill="#101010" font-weight="bold" textLength="15.3" lengthAdjust="spacingAndGlyphs">R11</text>
<text x="655.8" y="805.9" font-size="9.2" fill="#101010" font-weight="bold" textLength="14.0" lengthAdjust="spacingAndGlyphs">2k5</text>
<text x="772.6" y="771.2" font-size="9.2" fill="#101010" font-weight="bold" textLength="41.1" lengthAdjust="spacingAndGlyphs">BC337-40</text>
<text x="757.6" y="787.9" font-size="9.2" fill="#101010" font-weight="bold" textLength="10.9" lengthAdjust="spacingAndGlyphs">Q3</text>
<text x="816.2" y="781.7" font-size="9.2" fill="#101010" font-weight="bold" textLength="10.9" lengthAdjust="spacingAndGlyphs">R9</text>
<text x="813.7" y="805.5" font-size="9.2" fill="#101010" font-weight="bold" textLength="14.2" lengthAdjust="spacingAndGlyphs">100</text>
<text x="832.9" y="772.8" font-size="9.2" fill="#101010" font-weight="bold" textLength="31.0" lengthAdjust="spacingAndGlyphs">1N5404</text>
<text x="877.3" y="748.9" font-size="9.2" fill="#101010" font-weight="bold" textLength="11.4" lengthAdjust="spacingAndGlyphs">C6</text>
<text x="878.1" y="772.8" font-size="9.2" fill="#101010" font-weight="bold" textLength="9.2" lengthAdjust="spacingAndGlyphs">1p</text>
<text x="871.4" y="710" font-size="9.2" fill="#101010" font-weight="bold" textLength="16.8" lengthAdjust="spacingAndGlyphs">R12</text>
<text x="872.3" y="733.5" font-size="9.2" fill="#101010" font-weight="bold" textLength="14.7" lengthAdjust="spacingAndGlyphs">10k</text>
<text x="913.3" y="797.9" font-size="9.2" fill="#101010" font-weight="bold" textLength="10.9" lengthAdjust="spacingAndGlyphs">C7</text>
<text x="914.1" y="817.2" font-size="9.2" fill="#101010" font-weight="bold" textLength="14.2" lengthAdjust="spacingAndGlyphs">10µ</text>
<text x="887.3" y="823" font-size="9.2" fill="#101010" font-weight="bold" textLength="15.9" lengthAdjust="spacingAndGlyphs">D11</text>
<text x="809.5" y="828.1" font-size="9.2" fill="#101010" font-weight="bold" textLength="10.9" lengthAdjust="spacingAndGlyphs">R7</text>
<text x="808.6" y="851.9" font-size="9.2" fill="#101010" font-weight="bold" textLength="12.6" lengthAdjust="spacingAndGlyphs">0.2</text>
<text x="860.5" y="859.9" font-size="9.2" fill="#101010" font-weight="bold" textLength="11.4" lengthAdjust="spacingAndGlyphs">Q5</text>
<text x="860.5" y="875" font-size="9.2" fill="#101010" font-weight="bold" textLength="35.2" lengthAdjust="spacingAndGlyphs">BC547B</text>
<text x="792.7" y="880.7" font-size="9.2" fill="#101010" font-weight="bold" textLength="15.9" lengthAdjust="spacingAndGlyphs">R14</text>
<text x="793.2" y="904.6" font-size="9.2" fill="#101010" font-weight="bold" textLength="14.6" lengthAdjust="spacingAndGlyphs">470</text>
<text x="951.5" y="797.9" font-size="9.2" fill="#101010" font-weight="bold" textLength="16.2" lengthAdjust="spacingAndGlyphs">R24</text>
<text x="951.5" y="813" font-size="9.2" fill="#101010" font-weight="bold" textLength="14.5" lengthAdjust="spacingAndGlyphs">{R}</text>
<text x="1044.4" y="795" font-size="9.2" fill="#101010" font-weight="bold" textLength="7.3" lengthAdjust="spacingAndGlyphs">I1</text>
<text x="1044.4" y="828" font-size="9.2" fill="#101010" font-weight="bold">0</text>
<text x="871.9" y="624.7" font-size="9.2" fill="#101010" font-weight="bold" textLength="15.9" lengthAdjust="spacingAndGlyphs">R16</text>
<text x="873.6" y="649.7" font-size="9.2" fill="#101010" font-weight="bold" textLength="14.2" lengthAdjust="spacingAndGlyphs">220</text>
<text x="868.4" y="674.7" font-size="9.2" fill="#101010" font-weight="bold" textLength="30.2" lengthAdjust="spacingAndGlyphs">1N4148</text>
<text x="878.8" y="685.9" font-size="9.2" fill="#101010" font-weight="bold" textLength="16.4" lengthAdjust="spacingAndGlyphs">D10</text>
<text x="918.4" y="685.9" font-size="9.2" fill="#101010" font-weight="bold" textLength="10.4" lengthAdjust="spacingAndGlyphs">L3</text>
<text x="919" y="702.8" font-size="9.2" fill="#101010" font-weight="bold" textLength="19.3" lengthAdjust="spacingAndGlyphs">100n</text>
<text x="463.6" y="654.3" font-size="9.2" fill="#1818c8" font-weight="bold" textLength="10.6" lengthAdjust="spacingAndGlyphs">5V</text>
<text x="846.2" y="602.9" font-size="9.2" fill="#101010" font-weight="bold" textLength="11.6" lengthAdjust="spacingAndGlyphs" transform="rotate(-90 846.2 602.9)">Q4</text>
<text x="861.6" y="604" font-size="9.2" fill="#101010" font-weight="bold" textLength="36.2" lengthAdjust="spacingAndGlyphs" transform="rotate(-90 861.6 604)">2N3055</text>
<text x="807.4" y="635.7" font-size="9.2" fill="#101010" font-weight="bold" textLength="11.7" lengthAdjust="spacingAndGlyphs" transform="rotate(-90 807.4 635.7)">Q2</text>
<text x="821.2" y="637" font-size="9.2" fill="#101010" font-weight="bold" textLength="36.7" lengthAdjust="spacingAndGlyphs" transform="rotate(-90 821.2 637)">2SD882</text>
</g>
</svg></body></html>
